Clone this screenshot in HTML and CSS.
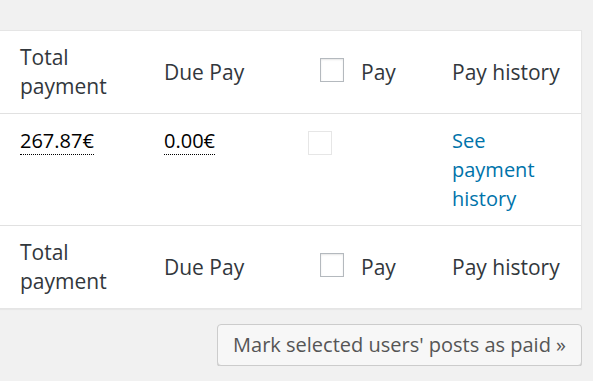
FILE: index.html
```html
<!DOCTYPE html>
<html lang="en">
<head>
  <meta charset="UTF-8">
  <meta name="viewport" content="width=device-width, initial-scale=1.0">
  <title>Author payments</title>
  <link rel="stylesheet" href="styles.css">
</head>
<body>
  <div id="payments">
    <table class="pay-table">
      <colgroup>
        <col class="col-total">
        <col>
        <col>
        <col>
      </colgroup>
      <thead>
        <tr>
          <th class="first">Total payment</th>
          <th>Due Pay</th>
          <th class="check-column"><input type="checkbox" class="pay-check"><span class="pay-label">Pay</span></th>
          <th>Pay history</th>
        </tr>
      </thead>
      <tbody>
        <tr>
          <td class="first"><abbr class="amount" title="Total payment">267.87€</abbr></td>
          <td><abbr class="amount" title="Due pay">0.00€</abbr></td>
          <td class="check-column"><input type="checkbox" class="pay-check row-check" disabled></td>
          <td><a href="#" class="history-link">See payment history</a></td>
        </tr>
      </tbody>
      <tfoot>
        <tr>
          <th class="first">Total payment</th>
          <th>Due Pay</th>
          <th class="check-column"><input type="checkbox" class="pay-check"><span class="pay-label">Pay</span></th>
          <th>Pay history</th>
        </tr>
      </tfoot>
    </table>

    <div class="actions">
      <button class="button-secondary">Mark selected users' posts as paid »</button>
    </div>
  </div>
</body>
</html>
```

FILE: styles.css
```css
body { margin: 0; background-color: #f1f1f1; color: #32373c; font-family: "Open Sans", "Liberation Sans", sans-serif; overflow: hidden; }
#payments { padding-top: 30px; margin-left: -1px; width: 583px; }
.pay-table { width: 583px; table-layout: fixed; border-collapse: separate; border-spacing: 0; background-color: #fff; border: 1px solid #e5e5e5; box-shadow: 0 1px 1px rgba(0,0,0,0.04); }
.pay-table col { width: 144px; }
.pay-table col.col-total { width: 149px; }
.pay-table th, .pay-table td { padding: 12px 15px; font-weight: 400; text-align: left; }
.pay-table th { font-size: 21px; line-height: 29px; color: #32373c; vertical-align: middle; }
.pay-table td { font-size: 20px; line-height: 29px; color: #000; vertical-align: top; }
.pay-table th.first, .pay-table td.first { padding-left: 20px; }
.pay-table thead th { border-bottom: 1px solid #e1e1e1; }
.pay-table tfoot th { border-top: 1px solid #e1e1e1; }
.pay-table th.check-column { padding-left: 27px; }
.pay-check { -webkit-appearance: none; appearance: none; width: 24px; height: 24px; margin: 0; vertical-align: top; background-color: #fff; border: 1px solid #b4b9be; box-shadow: inset 0 1px 2px rgba(0,0,0,0.1); box-sizing: border-box; }
.pay-check.row-check { display: block; margin-top: 5px; border-color: #e6e6e6; box-shadow: none; }
.pay-label { margin-left: 17px; }
.amount { text-decoration: none; border-bottom: 1px dotted #000; }
.history-link { color: #0073aa; text-decoration: none; }
.actions { margin-top: 15px; text-align: right; }
.button-secondary { height: 42px; padding: 0 15px; font-family: "Open Sans", "Liberation Sans", sans-serif; font-size: 20px; line-height: 40px; color: #555; background-color: #f7f7f7; border: 1px solid #ccc; border-radius: 4px; box-shadow: 0 1px 0 #ccc; cursor: pointer; }
```
